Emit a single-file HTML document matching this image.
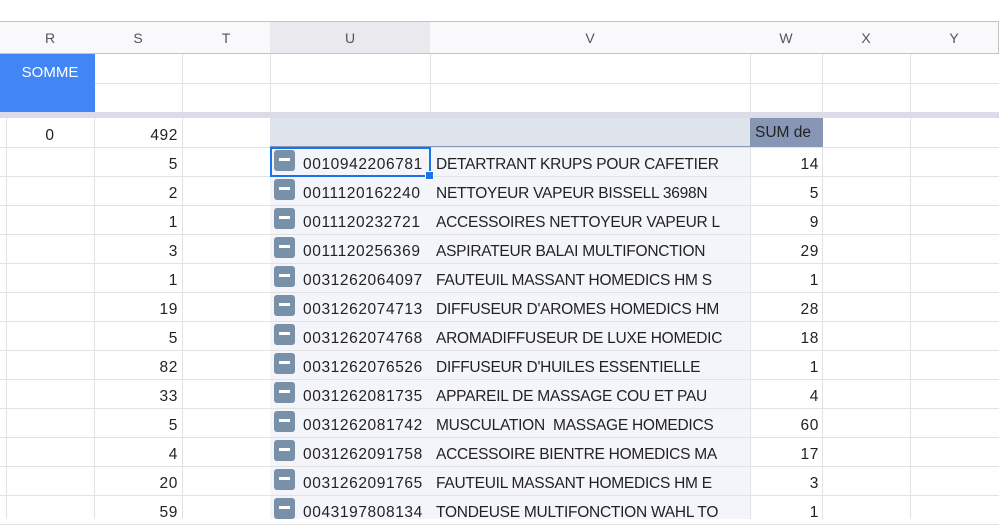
<!DOCTYPE html><html><head><style>
*{margin:0;padding:0;box-sizing:border-box}
body{width:999px;height:519px;overflow:hidden;background:#fff;font-family:"Liberation Sans",sans-serif;position:relative}
.a{position:absolute}
.h{top:21px;height:33px;background:#f9f9fc;border-top:1px solid #c4c4c8;border-bottom:1px solid #c4c4c8;border-right:1px solid #c4c4c8;color:#555;font-size:14px;text-align:center;line-height:32px}
.vl{width:1px;background:#e2e2e2;top:54px;height:465px}
.hl{height:1px;background:#e2e2e2;left:0;width:999px}
.t{font-size:15.5px;color:#222;line-height:29px;height:29px;white-space:nowrap;overflow:hidden}
.r{text-align:right}
.n{letter-spacing:0.6px}
.v{letter-spacing:-0.25px}
.ic{width:21px;height:21px;background:#7890a8;border-radius:3px}
.ic:after{content:"";position:absolute;left:5px;top:8px;width:11px;height:3px;background:#fff}
</style></head><body>
<div class="a h" style="left:-1px;width:8px"></div>
<div class="a h" style="left:6px;width:89px">R</div>
<div class="a h" style="left:94px;width:89px">S</div>
<div class="a h" style="left:182px;width:89px">T</div>
<div class="a h" style="left:270px;width:161px;background:#eae9ed">U</div>
<div class="a h" style="left:430px;width:321px">V</div>
<div class="a h" style="left:750px;width:73px">W</div>
<div class="a h" style="left:822px;width:89px">X</div>
<div class="a h" style="left:910px;width:89px">Y</div>
<div class="a hl" style="top:83px"></div>
<div class="a vl" style="left:94px"></div><div class="a vl" style="left:182px"></div><div class="a vl" style="left:270px"></div><div class="a vl" style="left:430px"></div><div class="a vl" style="left:750px"></div><div class="a vl" style="left:822px"></div><div class="a vl" style="left:910px"></div><div class="a vl" style="left:6px"></div>
<div class="a" style="left:0;top:54px;width:95px;height:58px;background:#4285f4"></div>
<div class="a" style="left:6px;top:54px;width:88px;height:29px;color:#fff;font-size:15px;text-align:center;line-height:37px">SOMME</div>
<div class="a" style="left:0;top:112px;width:999px;height:6px;background:#dcdce8"></div>
<div class="a" style="left:270px;top:118px;width:480px;height:29px;background:#dfe4ec"></div>
<div class="a" style="left:750px;top:118px;width:73px;height:29px;background:#8896b5;font-size:15.5px;line-height:29px;padding-left:5px;color:#222">SUM de</div>
<div class="a" style="left:270px;top:147px;width:480px;height:372px;background:#f4f5fb"></div>
<div class="a" style="left:270px;top:146px;width:480px;height:2px;background:#8896b5"></div>
<div class="a t n" style="left:6px;top:121px;width:88px;text-align:center">0</div>
<div class="a t r n" style="left:94px;top:121px;width:84px">492</div>
<div id="rows"></div>
<script>
var d=[["5","0010942206781","DETARTRANT KRUPS POUR CAFETIER","14"],["2","0011120162240","NETTOYEUR VAPEUR BISSELL 3698N","5"],["1","0011120232721","ACCESSOIRES NETTOYEUR VAPEUR L","9"],["3","0011120256369","ASPIRATEUR BALAI MULTIFONCTION","29"],["1","0031262064097","FAUTEUIL MASSANT HOMEDICS HM S","1"],["19","0031262074713","DIFFUSEUR D'AROMES HOMEDICS HM","28"],["5","0031262074768","AROMADIFFUSEUR DE LUXE HOMEDIC","18"],["82","0031262076526","DIFFUSEUR D'HUILES ESSENTIELLE","1"],["33","0031262081735","APPAREIL DE MASSAGE COU ET PAU","4"],["5","0031262081742","MUSCULATION&nbsp; MASSAGE HOMEDICS","60"],["4","0031262091758","ACCESSOIRE BIENTRE HOMEDICS MA","17"],["20","0031262091765","FAUTEUIL MASSANT HOMEDICS HM E","3"],["59","0043197808134","TONDEUSE MULTIFONCTION WAHL TO","1"]];
var h="<div class='a hl' style='top:147px'></div>";
d.forEach(function(r,i){var y=147+29*i;
h+="<div class='a hl' style='top:"+(y+29)+"px'></div>";
h+="<div class='a t r n' style='left:94px;top:"+(y+3)+"px;width:84px'>"+r[0]+"</div>";
h+="<div class='a ic' style='left:274px;top:"+(y+3)+"px'></div>";
h+="<div class='a t n' style='left:303px;top:"+(y+3)+"px;width:126px'>"+r[1]+"</div>";
h+="<div class='a t v' style='left:436px;top:"+(y+3)+"px;width:312px'>"+r[2]+"</div>";
h+="<div class='a t r n' style='left:750px;top:"+(y+3)+"px;width:69px'>"+r[3]+"</div>";});
document.getElementById("rows").innerHTML=h;
</script>
<div class="a" style="left:750px;top:148px;width:1px;height:371px;background:#e2e2e2"></div>
<div class="a" style="left:270px;top:147px;width:161px;height:30px;border:2px solid #1a73e8"></div>
<div class="a" style="left:425px;top:171px;width:9px;height:9px;background:#1a73e8;border:1px solid #fff"></div>
</body></html>
